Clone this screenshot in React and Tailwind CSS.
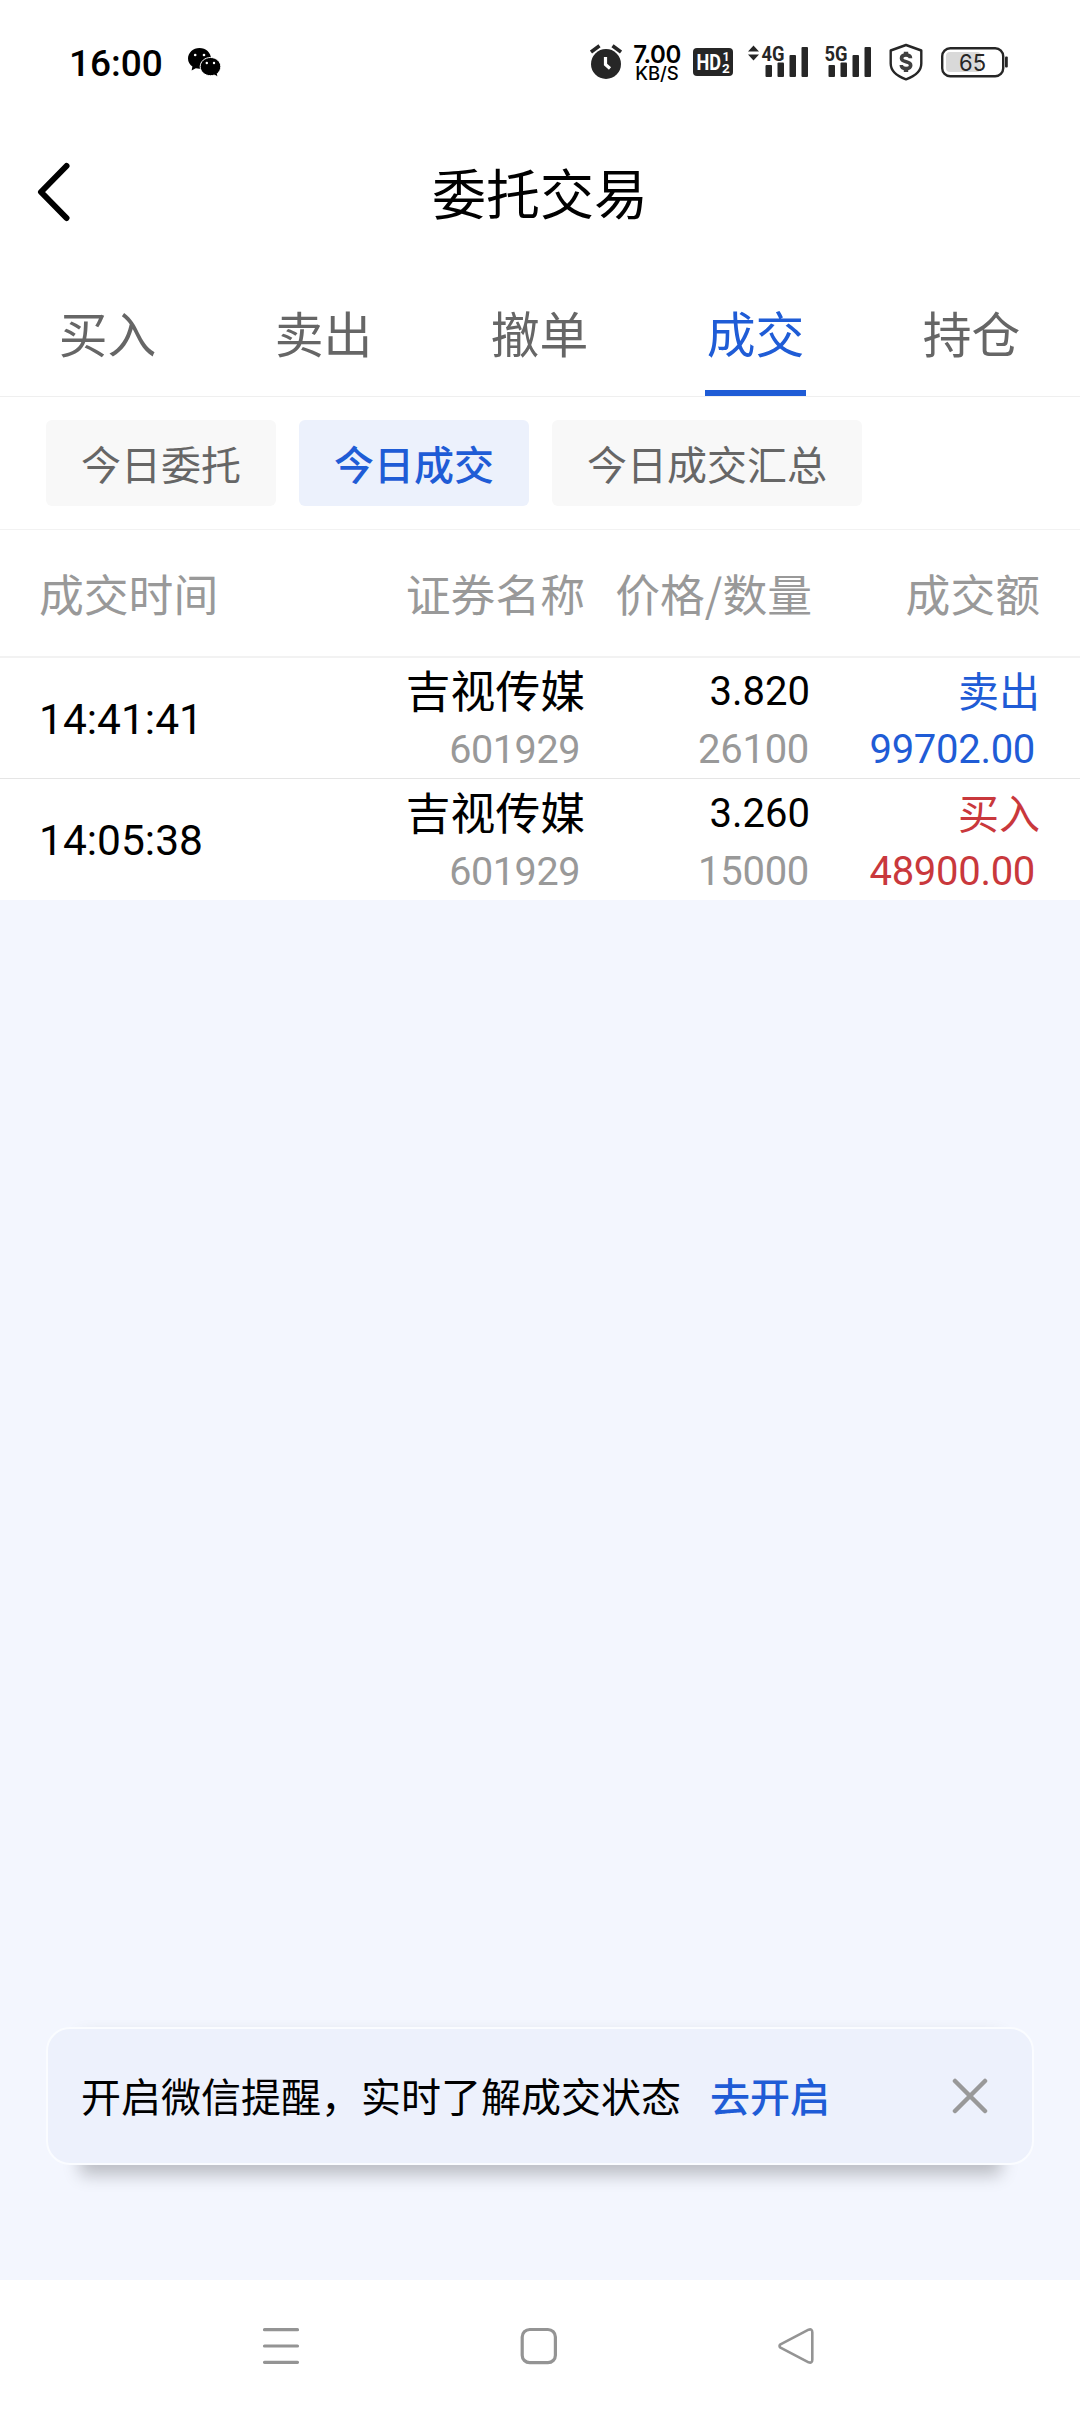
import React, { useState } from 'react';

const tabs = ['买入', '卖出', '撤单', '成交', '持仓'];
const filters = ['今日委托', '今日成交', '今日成交汇总'];

const trades = [
  { id: 1, time: '14:41:41', name: '吉视传媒', code: '601929', price: '3.820', qty: '26100', side: 'sell', amount: '99702.00' },
  { id: 2, time: '14:05:38', name: '吉视传媒', code: '601929', price: '3.260', qty: '15000', side: 'buy', amount: '48900.00' },
];

const WechatIcon = () => (
  <svg className="ml-[25px] w-[34px] h-[29px]" viewBox="0 0 34 29" fill="#000">
    <path d="M11.5 0C5.100 0 0 4.700 0 10.500c0 3.300 1.700 6.200 4.400 8.100L3.600 22.500l4.200-2.300c1.200.3 2.400.5 3.700.5 6.400 0 11.500-4.500 11.500-10.200S17.900 0 11.500 0z" />
    <path d="M22.500 9.500c-5.700 0-10.300 4-10.300 9.100s4.600 9.100 10.300 9.100c1.300 0 2.500-.2 3.700-.6l3.900 1.900-.8-3.400c2.100-1.700 3.500-4.200 3.500-7 0-5.100-4.600-9.100-10.300-9.100z" stroke="#fff" strokeWidth="1" />
    <g fill="#fff">
      <circle cx="7.200" cy="7" r="1.300" />
      <circle cx="16" cy="7" r="1.300" />
      <circle cx="18.800" cy="15" r="1.200" />
      <circle cx="26" cy="15" r="1.200" />
    </g>
  </svg>
);

const AlarmIcon = () => (
  <svg className="w-8 h-[36px]" viewBox="0 0 32 36" fill="none">
    <circle cx="16" cy="20" r="15" fill="#262626" />
    <path d="M1 8l8.500-6.300M31 8l-8.500-6.300" stroke="#262626" strokeWidth="3.600" />
    <path d="M15.500 13v7.500l4.500 4" stroke="#fff" strokeWidth="3.200" />
  </svg>
);

const SignalIcon = ({ label, arrows }) => (
  <svg className="w-[62px] h-[42px]" viewBox="0 -3 62 42" fill="#262626">
    {arrows && <path d="M5.500 1.500l5.500 6H0zM5.500 16.500l5.500-6H0z" />}
    <text x="13.500" y="16.500" fontFamily="Roboto, sans-serif" fontWeight="700" fontSize="21" textLength="23" lengthAdjust="spacingAndGlyphs">{label}</text>
    <rect x="17.500" y="21" width="6.500" height="12" rx="1" />
    <rect x="29.500" y="18.500" width="6.500" height="14.500" rx="1" />
    <rect x="41.500" y="11" width="6.500" height="22" rx="1" />
    <rect x="53.500" y="3" width="6.500" height="30" rx="1" />
  </svg>
);

const ShieldIcon = () => (
  <svg className="ml-[16px] w-[34px] h-[38px]" viewBox="0 0 34 38" fill="none">
    <path d="M17 2L32.300 7.500v13C32.300 28.500 25 33.500 17 36.300 9 33.500 1.700 28.500 1.700 20.500v-13z" stroke="#262626" strokeWidth="2.400" strokeLinejoin="round" />
    <path d="M21.500 15.300c0-2.200-1.800-3.300-4.500-3.300s-4.500 1.200-4.500 3.300c0 4.700 9.200 2.300 9.200 7 0 2.200-1.900 3.300-4.700 3.300s-4.700-1.200-4.700-3.500" stroke="#404040" strokeWidth="3.600" />
    <path d="M17 8.800v3.500M17 25.500v3.500" stroke="#404040" strokeWidth="4.400" />
  </svg>
);

const StatusBar = () => (
  <div className="h-[124px] shrink-0 flex items-center pl-[69px]">
    <span className="font-['Roboto'] font-medium text-[37px] leading-none pt-[2px]">16:00</span>
    <WechatIcon />
    <div className="ml-auto mr-[72px] flex items-center">
      <AlarmIcon />
      <div className="ml-[10px] w-[50px] pt-[3px] flex flex-col items-center font-['Inter'] font-semibold">
        <span className="text-[24px] leading-[19px] tracking-[-0.5px]">7.00</span>
        <span className="text-[18.500px] leading-[19px] font-medium">KB/S</span>
      </div>
      <svg className="ml-[11px] w-10 h-7" viewBox="0 0 40 28">
        <rect width="40" height="28" rx="4" fill="#262626" />
        <g fill="#fff" fontFamily="Roboto, sans-serif" fontWeight="700">
          <text x="3.500" y="21.500" fontSize="21.500" textLength="24.500" lengthAdjust="spacingAndGlyphs">HD</text>
          <text x="29.500" y="13" fontSize="12.500">1</text>
          <text x="29" y="25" fontSize="13.500">2</text>
        </g>
      </svg>
      <div className="ml-[15px] flex">
        <SignalIcon label="4G" arrows />
        <div className="ml-[1px]">
          <SignalIcon label="5G" />
        </div>
      </div>
      <ShieldIcon />
      <svg className="ml-[17px] w-[68px] h-[32px]" viewBox="0 0 68 32">
        <rect x="2.200" y="2.200" width="61" height="28" rx="8" fill="none" stroke="#262626" strokeWidth="2.400" />
        <rect x="6" y="6" width="35" height="20" rx="4" fill="#d9d9d9" />
        <rect x="65" y="10.500" width="2.800" height="11" rx="1" fill="#262626" />
        <text x="32.500" y="24.500" textAnchor="middle" fontFamily="Inter, sans-serif" fontSize="23" textLength="27" lengthAdjust="spacingAndGlyphs" fill="#262626">65</text>
      </svg>
    </div>
  </div>
);

const TradeRow = ({ trade }) => {
  const color = trade.side === 'sell' ? 'text-[#1f5cd6]' : 'text-[#c9383c]';
  return (
    <div className="h-[121px] border-b border-[#e5e5e5] last:border-b-0 pl-[39px] pr-10 grid grid-cols-[250px_296px_227px_228px] items-center text-right">
      <span className="font-['Roboto'] text-[42.500px] text-left leading-none pt-[4px]">{trade.time}</span>
      <div className="h-[120px] pt-[4px]">
        <p className="text-[44.800px] leading-[54px]">{trade.name}</p>
        <p className="font-['Roboto'] text-[39.500px] leading-[68px] tracking-[-0.4px] text-[#999] pr-[5px]">{trade.code}</p>
      </div>
      <div className="font-['Roboto'] text-[40px] h-[120px] pt-[5px]">
        <p className="leading-[58px] pr-[2px]">{trade.price}</p>
        <p className="leading-[57px] tracking-[-0.3px] text-[#999] pr-[3px]">{trade.qty}</p>
      </div>
      <div className={`h-[120px] pt-[2px] ${color}`}>
        <p className="text-[41px] leading-[58px]">{trade.side === 'sell' ? '卖出' : '买入'}</p>
        <p className="font-['Roboto'] text-[40px] leading-[63px] tracking-[-0.3px] pr-[5px]">{trade.amount}</p>
      </div>
    </div>
  );
};

const App = () => {
  const [activeTab, setActiveTab] = useState('成交');
  const [activeFilter, setActiveFilter] = useState('今日成交');
  const [showNotice, setShowNotice] = useState(true);

  return (
    <div className="w-[1080px] h-[2412px] flex flex-col bg-[#f3f6fe] text-black font-['Noto_Sans_CJK_SC',sans-serif] overflow-hidden">
      <div className="bg-white">
        <StatusBar />

        {/* Title */}
        <div className="h-[136px] grid grid-cols-[120px_1fr_120px] items-center">
          <svg className="ml-[36px] w-9 h-[60px]" viewBox="0 0 36 60" fill="none" stroke="#000" strokeWidth="6" strokeLinecap="round" strokeLinejoin="round">
            <path d="M30.500 4L5 30l25.500 26" />
          </svg>
          <h1 className="text-[54px] leading-none text-center">委托交易</h1>
        </div>

        {/* Tabs */}
        <div className="h-[137px] flex border-b border-[#efefef]">
          {tabs.map((tab) => (
            <button
              key={tab}
              onClick={() => setActiveTab(tab)}
              className="flex-1 flex justify-center pr-[1px]"
            >
              <span
                className={`h-[136px] w-[101px] text-[48.800px] leading-[143px] border-b-[6px] ${
                  tab === activeTab ? 'text-[#1f5cd6] border-[#1f5cd6]' : 'text-[#666] border-transparent'
                }`}
              >
                {tab}
              </span>
            </button>
          ))}
        </div>

        {/* Filters */}
        <div className="h-[133px] flex items-center gap-[23px] px-[46px] border-b border-[#f2f2f2]">
          {filters.map((filter) => (
            <button
              key={filter}
              onClick={() => setActiveFilter(filter)}
              className={`h-[86px] px-[35px] rounded-md text-[40px] leading-[86px] ${
                filter === activeFilter ? 'bg-[#ecf1fc] text-[#1f5cd6] font-medium' : 'bg-[#f8f8f8] text-[#666]'
              }`}
            >
              {filter}
            </button>
          ))}
        </div>

        {/* Table */}
        <div className="h-[128px] border-b-2 border-[#f2f2f2] pl-[39px] pr-10 grid grid-cols-[250px_296px_227px_228px] items-center text-right text-[44.800px] leading-none text-[#999]">
          <span className="text-left">成交时间</span>
          <span>证券名称</span>
          <span className="whitespace-nowrap">价格/数量</span>
          <span>成交额</span>
        </div>
        <div>
          {trades.map((trade) => (
            <TradeRow key={trade.id} trade={trade} />
          ))}
        </div>
      </div>

      {/* Notice */}
      {showNotice && (
        <div className="relative mt-auto mb-[115px] mx-[46px]">
          <div className="absolute inset-y-0 left-[34px] right-[33px] shadow-[0_10px_16px_rgba(0,0,0,0.23)]" />
          <div className="relative h-[138px] rounded-3xl border-2 border-[#fafcff] bg-[#edf1fc] pl-[33px] pr-[44px] flex items-center text-[40px] leading-none">
            <span className="pb-[3px]">开启微信提醒，实时了解成交状态</span>
            <button className="ml-[29px] pb-[3px] text-[#1f5cd6] font-medium">去开启</button>
            <button className="ml-auto" onClick={() => setShowNotice(false)}>
              <svg className="w-[36px] h-[36px]" viewBox="0 0 36 36" fill="none" stroke="#999" strokeWidth="4.500" strokeLinecap="round">
                <path d="M3 3l30 30M33 3L3 33" />
              </svg>
            </button>
          </div>
        </div>
      )}

      {/* System nav */}
      <div className="h-[132px] shrink-0 bg-white flex justify-between pl-[262px] pr-[264px] pt-[47px]">
        <svg className="w-[38px] h-[38px]" viewBox="0 0 38 38" stroke="#949494" strokeWidth="3.200" strokeLinecap="round">
          <path d="M2.500 2.700h33M2.500 19h33M2.500 35.300h33" />
        </svg>
        <svg className="w-[38px] h-[38px]" viewBox="0 0 38 38" fill="none" stroke="#949494" strokeWidth="3.200">
          <rect x="2.200" y="2.500" width="33.200" height="33.200" rx="7.500" />
        </svg>
        <svg className="w-[38px] h-[38px]" viewBox="0 0 38 38" fill="none" stroke="#949494" strokeWidth="2.600" strokeLinejoin="round">
          <path d="M2.500 17.300L30.600 2.700Q34.300 1.500 34.300 5.200V32.800Q34.300 36.500 30.600 35.300L2.500 20.700Q.5 19 2.500 17.300z" />
        </svg>
      </div>
    </div>
  );
};

export default App;
